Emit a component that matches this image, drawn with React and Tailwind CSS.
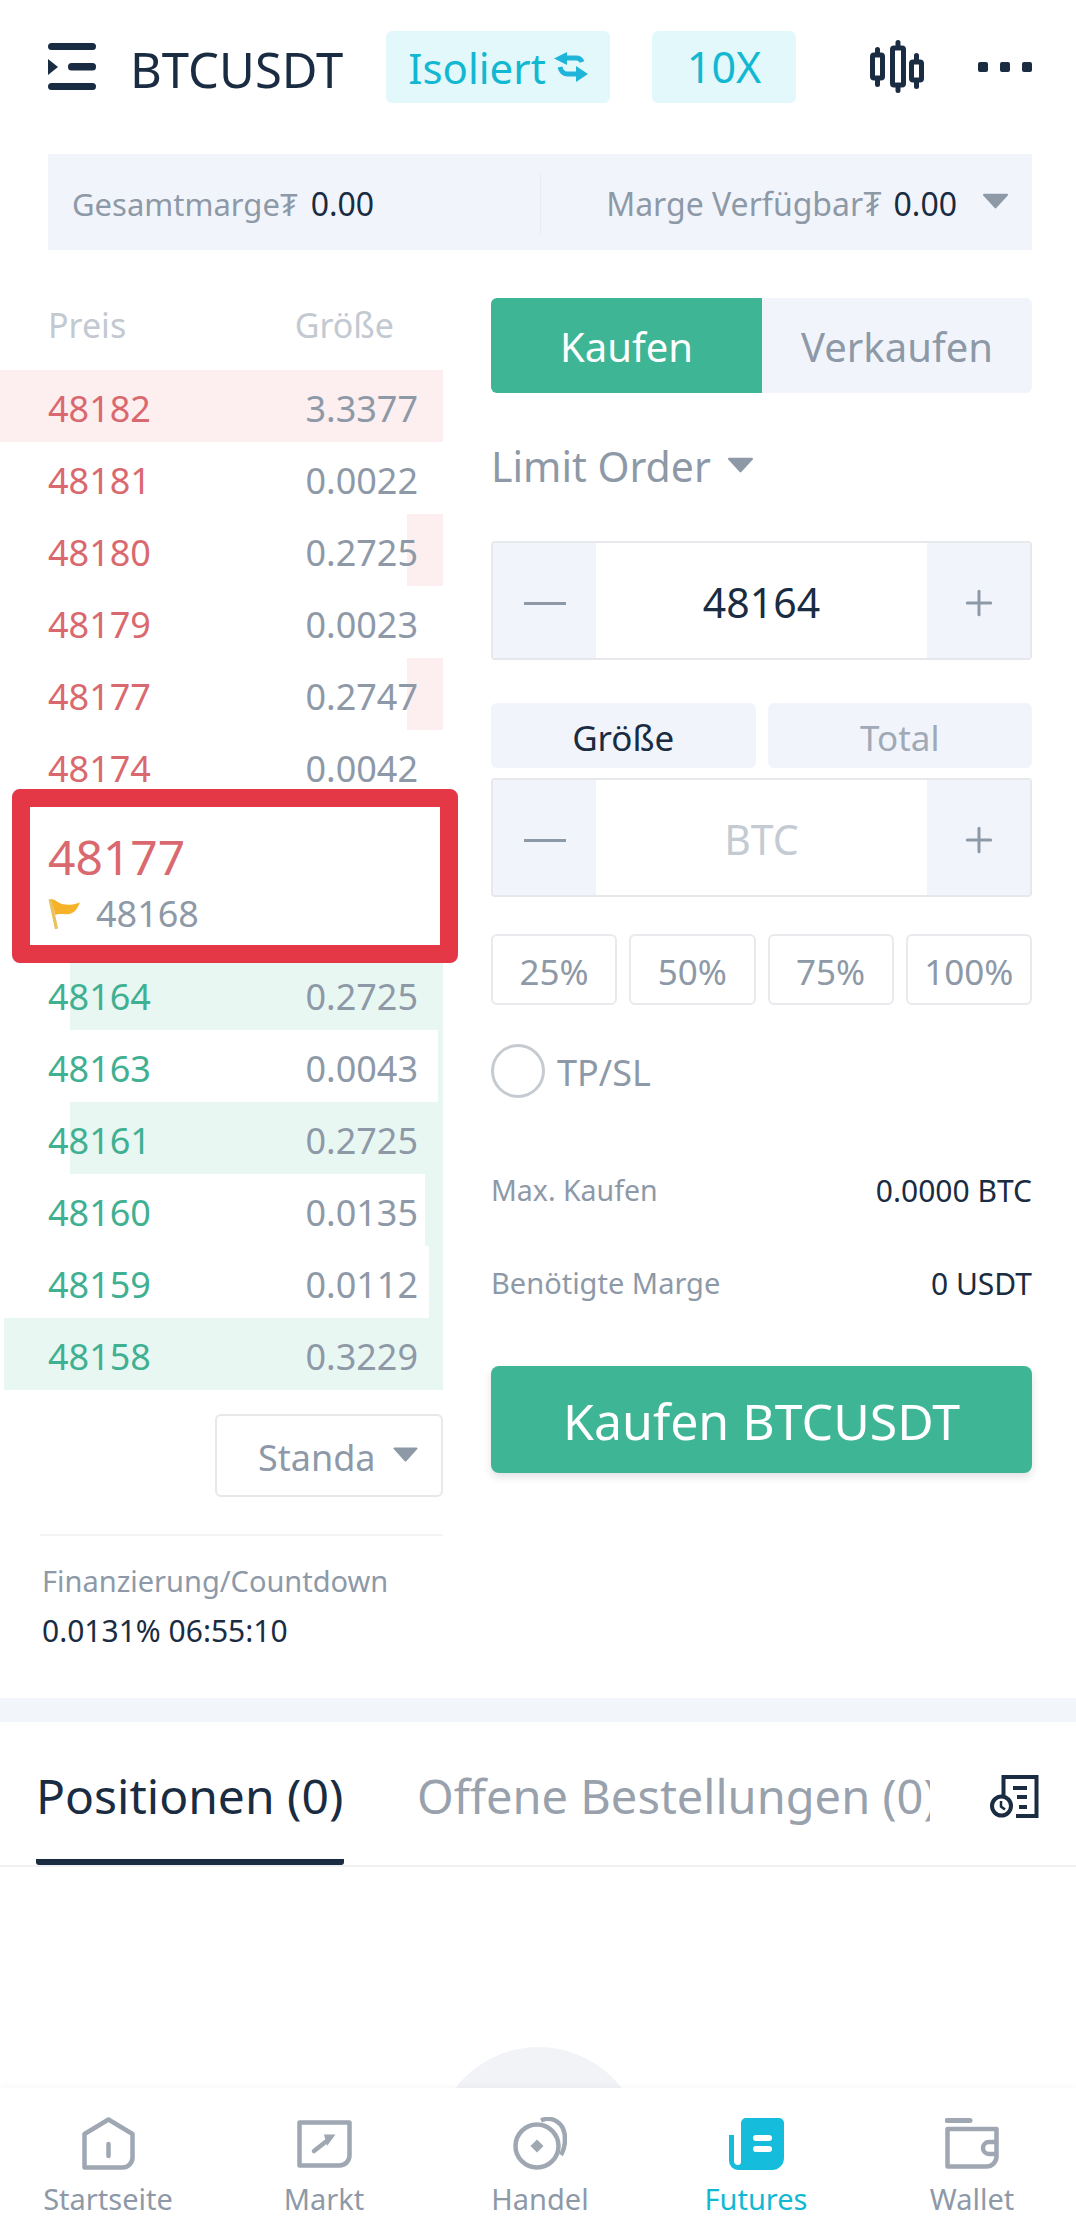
import { Plus } from 'lucide-react'

const ASKS = [
  { price: '48182', size: '3.3377', bar: 443 },
  { price: '48181', size: '0.0022', bar: 0 },
  { price: '48180', size: '0.2725', bar: 36 },
  { price: '48179', size: '0.0023', bar: 0 },
  { price: '48177', size: '0.2747', bar: 36 },
  { price: '48174', size: '0.0042', bar: 0 },
]

const BIDS = [
  { price: '48164', size: '0.2725', bar: 373 },
  { price: '48163', size: '0.0043', bar: 5 },
  { price: '48161', size: '0.2725', bar: 373 },
  { price: '48160', size: '0.0135', bar: 18 },
  { price: '48159', size: '0.0112', bar: 14 },
  { price: '48158', size: '0.3229', bar: 439 },
]

function Caret({ className }) {
  return (
    <svg viewBox="0 0 24 16" className={className} fill="#8e99a8">
      <path d="M1 1.500h22a1 1 0 0 1 .8 1.600L13 15a1.300 1.300 0 0 1-2 0L.2 3.100A1 1 0 0 1 1 1.500z" />
    </svg>
  )
}

function MenuIcon() {
  return (
    <svg viewBox="0 0 48 47" className="w-[48px] h-[47px]" fill="#1a2c42">
      <rect x="0" y="0" width="48" height="7" rx="3.500" />
      <rect x="20" y="20" width="28" height="7.500" rx="3.500" />
      <rect x="0" y="40" width="48" height="7" rx="3.500" />
      <path d="M0 16l10 8-10 8z" />
    </svg>
  )
}

function CandleIcon() {
  return (
    <svg viewBox="0 0 54 53" className="w-[54px] h-[53px]" fill="none" stroke="#1a2c42" strokeLinecap="round">
      <path d="M7.500 9.500v5M7.500 39v5.500M28 2.500v5M28 46v4.500M46.500 15.500v6M46.500 41v5.500" strokeWidth="5" />
      <rect x="2.500" y="15" width="10" height="23" rx="1.500" strokeWidth="5" />
      <rect x="22.500" y="8" width="11" height="37" rx="1.500" strokeWidth="5" />
      <rect x="41.500" y="22" width="10" height="18" rx="1.500" strokeWidth="5" />
    </svg>
  )
}

function SwapIcon() {
  return (
    <svg viewBox="0 0 34 30" className="w-[34px] h-[30px]">
      <path d="M0 6.500L13 0v13z" fill="#1fb5d8" />
      <path d="M22 14l12 8-12 8z" fill="#1fb5d8" />
      <path d="M11 6h11c3 0 5 1 6 4" fill="none" stroke="#1fb5d8" strokeWidth="5" />
      <path d="M6 15c1 4 3 7 7 7h12" fill="none" stroke="#1fb5d8" strokeWidth="5" />
    </svg>
  )
}

function FlagIcon() {
  return (
    <svg viewBox="0 0 32 30" className="w-[34px] h-[32px]">
      <path d="M2 1l6 28" stroke="#e8c25c" strokeWidth="3" fill="none" />
      <path d="M3 1c5 0 7 5 14 5 5 1 9 0 13-2-2 6-5 10-10 11-6 1-9-1-13 1z" fill="#f6b32a" />
    </svg>
  )
}

function OrdersIcon() {
  return (
    <svg viewBox="0 0 50 43" className="w-[50px] h-[43px]" fill="none" stroke="#1a2c42">
      <path d="M13.500 20V2h33v39H26" strokeWidth="4" />
      <path d="M23 13h14M27 22h10M29 32h8" strokeWidth="4" />
      <circle cx="11.500" cy="31" r="9.500" strokeWidth="4" />
      <path d="M11 26v5.500l4 3" strokeWidth="2.500" />
    </svg>
  )
}

function HomeIcon() {
  return (
    <svg viewBox="0 0 53 53" className="w-[53px] h-[53px]" fill="none" stroke="#9fa7b2" strokeWidth="4.500" strokeLinejoin="round">
      <path d="M2.500 50.500V17L26.500 2.500l24 14.500v23.500a10 10 0 0 1-10 10z" />
      <path d="M26.500 27v12" strokeLinecap="round" />
    </svg>
  )
}

function MarketIcon() {
  return (
    <svg viewBox="0 0 55 48" className="w-[55px] h-[48px]" fill="none" stroke="#9fa7b2" strokeWidth="4.500" strokeLinejoin="round">
      <path d="M2.500 2.500h50V35a10 10 0 0 1-10 10.500H2.500z" />
      <path d="M17 31l14-11" strokeLinecap="round" />
      <path d="M27 14.500h11.500L30 26z" fill="#9fa7b2" stroke="none" />
    </svg>
  )
}

function TradeIcon() {
  return (
    <svg viewBox="0 0 54 53" className="w-[54px] h-[53px]" fill="none" stroke="#9fa7b2" strokeWidth="4.500">
      <circle cx="24" cy="29" r="21.500" />
      <path d="M28 3.500C38 -1 52 4 52 22c0 6-1 11-4 16" />
      <path d="M24 22.500l6.500 6.500-6.500 6.500-6.500-6.500z" fill="#9fa7b2" stroke="none" />
    </svg>
  )
}

function FuturesIcon() {
  return (
    <svg viewBox="0 0 55 52" className="w-[55px] h-[52px]">
      <path
        d="M12 5a5 5 0 0 1 5-5h33a5 5 0 0 1 5 5v35a12 12 0 0 1-12 12H9a9 9 0 0 1-9-9V17h5v26a4 4 0 0 0 4 4 3 3 0 0 0 3-3z"
        fill="#16bcdc"
      />
      <rect x="24" y="17" width="19" height="6" rx="3" fill="#fff" />
      <rect x="24" y="28" width="19" height="6" rx="3" fill="#fff" />
    </svg>
  )
}

function WalletIcon() {
  return (
    <svg viewBox="0 0 54 51" className="w-[54px] h-[51px]" fill="none" stroke="#9fa7b2" strokeWidth="4.500" strokeLinejoin="round">
      <path d="M2 2.500h23" strokeLinecap="round" strokeWidth="5" />
      <path d="M2.500 48.500V11h49v27.500a10 10 0 0 1-10 10z" />
      <path d="M52 24h-8a6 6 0 0 0 0 12h8" />
    </svg>
  )
}

// One price level; the depth bar grows in from the right edge
function BookRow({ price, size, bar, side }) {
  const isAsk = side === 'ask'
  return (
    <div className="relative h-[72px] flex items-center justify-between pl-[48px] pr-[25px] pt-[5px]">
      <div
        className={`absolute right-0 top-0 bottom-0 ${isAsk ? 'bg-[#fdeeef]' : 'bg-[#e9f7f3]'}`}
        style={{ width: bar }}
      />
      <span className={`relative ${isAsk ? 'text-[#d9696f]' : 'text-[#3fb091]'}`}>{price}</span>
      <span className="relative text-[#8e99a8]">{size}</span>
    </div>
  )
}

function Stepper({ children }) {
  return (
    <div className="flex h-[119px] border-2 border-[#e6e8eb] rounded-[4px] overflow-hidden">
      <div className="w-[103px] bg-[#f1f5fb] flex items-center justify-center pt-[5px]">
        <div className="w-[42px] h-[3px] bg-[#8e99a8]" />
      </div>
      <div className="flex-1 flex items-center justify-center pt-[5px] text-[41px]">{children}</div>
      <div className="w-[103px] bg-[#f1f5fb] flex items-center justify-center pt-[5px]">
        <Plus className="w-[40px] h-[40px] text-[#8e99a8]" strokeWidth={1.800} />
      </div>
    </div>
  )
}

function NavItem({ icon, label, active }) {
  return (
    <div className="w-[216px] shrink-0 flex flex-col items-center">
      <div className="h-[53px] flex items-center justify-center">{icon}</div>
      <span className={`mt-[9px] text-[29px] leading-[40px] ${active ? 'text-[#12b8d2]' : 'text-[#8e99a8]'}`}>{label}</span>
    </div>
  )
}

export default function App() {
  return (
    <div className="w-[1076px] h-[2236px] bg-white flex flex-col overflow-hidden text-[#1a2c42] font-['Noto_Sans',sans-serif]">

      {/* Top bar */}
      <header className="h-[154px] shrink-0 pl-[48px] pr-[44px] flex items-start">
        <div className="mt-[43px]"><MenuIcon /></div>
        <h1 className="ml-[34px] mt-[38px] w-[213px] text-[49px] leading-[62px] font-normal whitespace-nowrap">BTCUSDT</h1>
        <div className="ml-[43px] mt-[31px] h-[72px] w-[224px] bg-[#e3f8fb] rounded-[6px] flex items-center justify-center gap-[8px] text-[42px] text-[#12b8d2]">
          Isoliert
          <SwapIcon />
        </div>
        <div className="ml-[42px] mt-[31px] h-[72px] w-[144px] bg-[#e3f8fb] rounded-[6px] flex items-center justify-center text-[43px] text-[#12b8d2]">
          10X
        </div>
        <div className="ml-[74px] mt-[40px]"><CandleIcon /></div>
        <div className="ml-auto mt-[62px] flex gap-[12px]">
          <div className="w-[10px] h-[10px] bg-[#1a2c42] rounded-[2px]" />
          <div className="w-[10px] h-[10px] bg-[#1a2c42] rounded-[2px]" />
          <div className="w-[10px] h-[10px] bg-[#1a2c42] rounded-[2px]" />
        </div>
      </header>

      {/* Margin summary */}
      <div className="mx-[48px] w-[984px] h-[96px] shrink-0 bg-[#f1f5fb] flex items-center pt-[4px] text-[32px]">
        <div className="w-[492px] pl-[24px] flex items-center gap-[13px]">
          <span className="text-[31px] text-[#8e99a8]">Gesamtmarge₮</span>
          <span>0.00</span>
        </div>
        <div className="w-px h-[62px] bg-[#e8ecf2]" />
        <div className="flex-1 pr-[24px] flex items-center justify-end">
          <span className="text-[#8e99a8]">Marge Verfügbar₮</span>
          <span className="ml-[12px]">0.00</span>
          <Caret className="w-[25px] h-[17px] ml-[26px] -mt-[8px]" />
        </div>
      </div>

      <main className="flex pt-[48px] h-[1448px] shrink-0">

        {/* Order book */}
        <section className="w-[443px] shrink-0 text-[36px] leading-[48px]">
          <div className="h-[72px] flex justify-between pl-[48px] pr-[49px] pt-[3px] text-[34px] text-[#c3c9d1]">
            <span>Preis</span>
            <span>Größe</span>
          </div>
          {ASKS.map(row => <BookRow key={row.price} side="ask" {...row} />)}

          <div className="relative z-10 -mt-[13px] -mb-[5px] ml-[12px] w-[446px] h-[174px] bg-white border-[18px] border-[#e43847] rounded-[8px] pl-[18px] pt-[18px]">
            <div className="text-[48px] leading-[64px] text-[#d9696f]">48177</div>
            <div className="mt-[1px] flex items-center text-[36px] leading-[48px] text-[#8e99a8]">
              <FlagIcon />
              <span className="ml-[14px]">48168</span>
            </div>
          </div>

          {BIDS.map(row => <BookRow key={row.price} side="bid" {...row} />)}

          <div className="mt-[24px] ml-[215px] w-[228px] h-[83px] border-2 border-[#e8e8ea] rounded-[6px] flex items-center pl-[41px] text-[36px] text-[#8e99a8]">
            <span className="pt-[5px]">Standa</span>
            <Caret className="w-[25px] h-[16px] ml-[17px] -mt-[4px]" />
          </div>

          <div className="mt-[37px] ml-[40px] border-t-2 border-[#f3f4f6] pt-[25px] pl-[2px] text-[29px] leading-[40px]">
            <div className="text-[#8e99a8]">Finanzierung/Countdown</div>
            <div className="mt-[10px] text-[30px]">0.0131% 06:55:10</div>
          </div>
        </section>

        {/* Order form */}
        <section className="ml-[48px] w-[541px]">
          <div className="flex h-[95px] rounded-[6px] overflow-hidden text-[40px]">
            <div className="w-[271px] pt-[3px] bg-[#3eb595] text-white flex items-center justify-center">Kaufen</div>
            <div className="flex-1 pt-[3px] bg-[#f1f5fb] text-[#8e99a8] flex items-center justify-center">Verkaufen</div>
          </div>

          <div className="mt-[46px] h-[56px] flex items-center text-[41px] text-[#8e99a8]">
            Limit Order
            <Caret className="w-[25px] h-[17px] ml-[17px] -mt-[6px]" />
          </div>

          <div className="mt-[46px]"><Stepper>48164</Stepper></div>

          <div className="mt-[43px] flex gap-[12px] text-[35px]">
            <div className="flex-1 h-[65px] pt-[5px] bg-[#f1f5fb] rounded-[6px] flex items-center justify-center">Größe</div>
            <div className="flex-1 h-[65px] pt-[5px] bg-[#f1f5fb] rounded-[6px] flex items-center justify-center text-[#a0a9b5]">Total</div>
          </div>

          <div className="mt-[10px]"><Stepper><span className="text-[#c5cbd3]">BTC</span></Stepper></div>

          <div className="mt-[37px] flex gap-[12px] text-[35px] text-[#8e99a8]">
            {['25%', '50%', '75%', '100%'].map(pct => (
              <div key={pct} className="flex-1 h-[71px] pt-[5px] border-2 border-[#e8eaed] rounded-[6px] flex items-center justify-center">{pct}</div>
            ))}
          </div>

          <div className="mt-[39px] flex items-center">
            <div className="w-[54px] h-[54px] rounded-full border-[3px] border-[#c6cbd1]" />
            <span className="ml-[12px] pt-[3px] text-[36px] leading-[48px] text-[#8e99a8]">TP/SL</span>
          </div>

          <div className="mt-[72px] h-[40px] flex items-center justify-between">
            <span className="text-[28.500px] text-[#8e99a8]">Max. Kaufen</span>
            <span className="text-[30px]">0.0000 BTC</span>
          </div>
          <div className="mt-[53px] h-[40px] flex items-center justify-between">
            <span className="text-[29px] text-[#8e99a8]">Benötigte Marge</span>
            <span className="text-[30px]">0 USDT</span>
          </div>

          <div className="mt-[63px] h-[107px] pt-[3px] bg-[#3eb595] rounded-[8px] shadow-[0_4px_8px_rgba(0,0,0,0.12)] flex items-center justify-center text-[50px] text-white">
            Kaufen BTCUSDT
          </div>
        </section>
      </main>

      <div className="h-[24px] shrink-0 bg-[#f2f6fa]" />

      {/* Tabs */}
      <div className="h-[145px] shrink-0 border-b-2 border-[#f0f1f3] flex items-start pl-[36px]">
        <div className="h-[143px] w-[308px] border-b-[6px] border-[#1a2c42] rounded-b-[3px] pt-[43px] text-[48px] leading-[62px] whitespace-nowrap">
          Positionen (0)
        </div>
        <div className="ml-[73px] w-[513px] overflow-hidden pt-[43px] text-[47px] leading-[62px] whitespace-nowrap text-[#98a1ac]">
          Offene Bestellungen (0)
        </div>
        <div className="ml-[60px] mt-[53px]"><OrdersIcon /></div>
      </div>

      {/* Empty state, its illustration runs under the nav */}
      <div className="flex-1 flex justify-center items-end overflow-hidden">
        <div className="w-[209px] h-[41px] overflow-hidden">
          <div className="w-[209px] h-[209px] rounded-full bg-[#f2f3f7]" />
        </div>
      </div>

      {/* Bottom navigation */}
      <nav className="h-[148px] shrink-0 bg-white shadow-[0_-2px_6px_rgba(0,0,0,0.03)] flex pt-[29px] overflow-hidden">
        <NavItem icon={<HomeIcon />} label="Startseite" />
        <NavItem icon={<MarketIcon />} label="Markt" />
        <NavItem icon={<TradeIcon />} label="Handel" />
        <NavItem icon={<FuturesIcon />} label="Futures" active />
        <NavItem icon={<WalletIcon />} label="Wallet" />
      </nav>
    </div>
  )
}
